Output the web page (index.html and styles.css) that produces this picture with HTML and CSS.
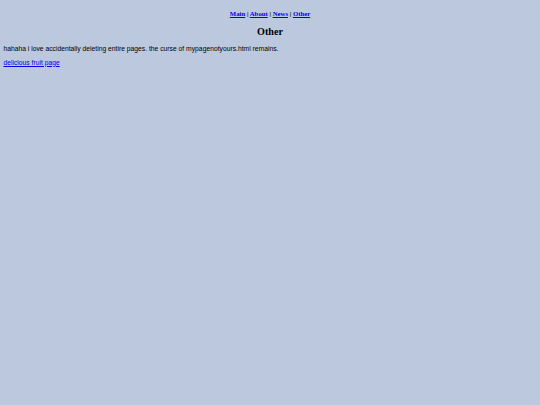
FILE: index.html
```html
<!DOCTYPE html>
<html>
<head>
<meta charset="utf-8">
<title>Other</title>
<link rel="stylesheet" href="styles.css">
</head>
<body>
<p class="nav"><a href="#">Main</a> | <a href="#">About</a> | <a href="#">News</a> | <a href="#">Other</a></p>
<h2 class="title">Other</h2>
<p class="text">hahaha i love accidentally deleting entire pages. the curse of mypagenotyours.html remains.</p>
<p class="text"><a href="#">delicious fruit page</a></p>
</body>
</html>
```
FILE: styles.css
```css
html {
  background: #bcc8de;
}
body {
  margin: 3.375px;
  background: #bcc8de;
}
.nav {
  margin: 6.75px 0;
  text-align: center;
  font-family: "Liberation Serif", "Times New Roman", serif;
  font-weight: bold;
  font-size: 6.75px;
}
.nav a {
  color: #0000ee;
}
.title {
  margin: 0.83em 0;
  text-align: center;
  font-family: "Liberation Serif", "Times New Roman", serif;
  font-size: 10.125px;
  font-weight: bold;
  color: #000;
}
.text {
  margin: 6.75px 0;
  font-family: "Liberation Sans", Arial, sans-serif;
  font-size: 6.75px;
  color: #000;
}
.text a {
  color: #0000ee;
}
```
